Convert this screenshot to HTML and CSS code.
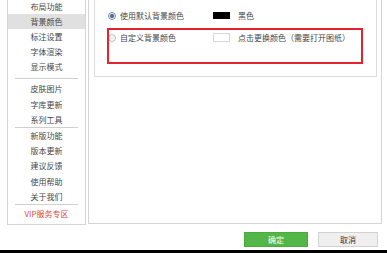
FILE: index.html
```html
<!DOCTYPE html>
<html lang="zh-CN">
<head>
<meta charset="utf-8">
<title>背景颜色</title>
<link rel="stylesheet" href="styles.css">
</head>
<body>
<div class="app">
  <div class="main">
    <nav class="sidebar">
      <ul class="menu">
        <li class="item">布局功能</li>
        <li class="item active">背景颜色</li>
        <li class="item">标注设置</li>
        <li class="item">字体渲染</li>
        <li class="item">显示模式</li>
        <li class="sep"></li>
        <li class="item">皮肤图片</li>
        <li class="item">字库更新</li>
        <li class="item">系列工具</li>
        <li class="sep sep2"></li>
        <li class="item">新版功能</li>
        <li class="item">版本更新</li>
        <li class="item">建议反馈</li>
        <li class="item">使用帮助</li>
        <li class="item">关于我们</li>
        <li class="sep sep3"></li>
        <li class="item vip">VIP服务专区</li>
      </ul>
    </nav>
    <section class="panel">
      <div class="group">
        <div class="row">
          <span class="radio checked"></span>
          <span class="label">使用默认背景颜色</span>
          <span class="swatch black"></span>
          <span class="desc">黑色</span>
        </div>
        <div class="row">
          <span class="radio"></span>
          <span class="label">自定义背景颜色</span>
          <span class="swatch white"></span>
          <span class="desc">点击更换颜色（需要打开图纸）</span>
        </div>
        <div class="highlight"></div>
      </div>
    </section>
  </div>
  <div class="footer">
    <button class="btn ok">确定</button>
    <button class="btn cancel">取消</button>
  </div>
  <div class="bottombar"></div>
</div>
</body>
</html>
```
FILE: styles.css
```css
* { box-sizing: border-box; }
html, body { margin: 0; padding: 0; background: #ffffff; }
body {
  width: 387px;
  height: 253px;
  overflow: hidden;
  font-family: "Noto Sans CJK SC", "Noto Sans", sans-serif;
  font-size: 8px;
  color: #444444;
}
.app { display: flex; flex-direction: column; height: 253px; }
.main {
  display: flex;
  height: 225px;
  padding-left: 7px;
  gap: 2px;
}
.sidebar {
  width: 79px;
  height: 225px;
  border: 1px solid #d4d4d4;
  border-top: none;
  overflow: hidden;
}
.menu {
  list-style: none;
  margin: -1.5px 0 0 0;
  padding: 0;
}
.item {
  height: 15.2px;
  line-height: 15.2px;
  text-align: center;
  color: #474747;
  white-space: nowrap;
}
.item.active { background: #e0e0e0; }
.item.vip { color: #e0473d; }
.sep {
  height: 1px;
  background: #cfcfcf;
  margin: 3.5px 7px 2.5px 7px;
}
.sep2 { margin: 0 7px 0 7px; }
.sep3 { margin: 0 7px 1px 7px; }
.panel {
  width: 294px;
  height: 224px;
  border: 1px solid #d4d4d4;
  border-top: none;
  padding-left: 5px;
}
.group {
  position: relative;
  width: 283px;
  height: 77px;
  border: 1px solid #dcdcdc;
  border-top: none;
  padding: 4.5px 0 0 13px;
}
.row {
  display: flex;
  align-items: center;
  height: 22px;
}
.radio {
  width: 8px;
  height: 8px;
  border-radius: 50%;
  border: 1px solid #c4c4c4;
  background: #f2f2f2;
  flex: none;
  margin-right: 4px;
}
.radio.checked {
  border-color: #9a9a9a;
  background: radial-gradient(circle, #2f6fb3 0, #3f7fc0 1.6px, #d8d8d8 2.4px, #ececec 100%);
}
.label { width: 93px; flex: none; white-space: nowrap; }
.swatch {
  width: 17px;
  flex: none;
  margin-right: 8px;
}
.swatch.black { height: 7px; background: #000000; }
.swatch.white { height: 9px; background: #ffffff; border: 1px solid #d6d6d6; }
.desc { white-space: nowrap; }
.highlight {
  position: absolute;
  left: 12px;
  top: 28px;
  width: 256px;
  height: 36px;
  border: 2px solid #e5222e;
  pointer-events: none;
}
.footer {
  height: 25px;
  display: flex;
  justify-content: flex-end;
  align-items: flex-start;
  gap: 10px;
  padding: 7px 9px 0 0;
}
.btn {
  height: 15px;
  margin: 0;
  padding: 0;
  font-family: inherit;
  font-size: 8px;
  line-height: 13px;
  border-radius: 0;
}
.btn.ok {
  width: 64px;
  background: #52b746;
  border: 1px solid #4aab3e;
  color: #ffffff;
}
.btn.cancel {
  width: 60px;
  background: #efefef;
  border: 1px solid #d2d2d2;
  color: #333333;
}
.bottombar {
  height: 3px;
  background: #000000;
}
```
